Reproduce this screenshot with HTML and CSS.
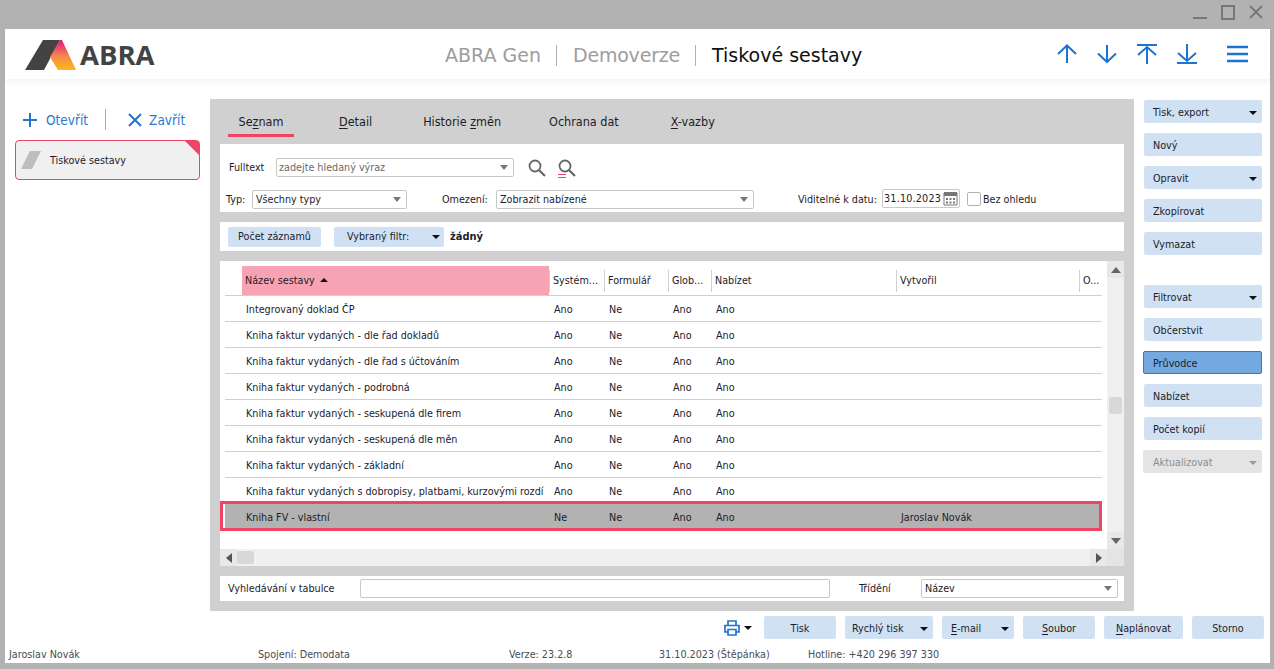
FILE: index.html
```html
<!DOCTYPE html>
<html lang="cs">
<head>
  <meta charset="UTF-8">
  <title>Tiskové sestavy</title>
  <link rel="stylesheet" href="styles.css">
</head>
<body>

  <div class="winbar">
    <svg width="72" height="20" viewBox="0 0 72 20">
      <path d="M1 15h14" stroke="#777" stroke-width="2"/>
      <path d="M30 3h12v13H30z" fill="none" stroke="#777" stroke-width="2"/>
      <path d="M58 3l12 12M70 3L58 15" stroke="#777" stroke-width="2"/>
    </svg>
  </div>

  <div class="window">
    <header class="top">
      <div class="logo">
        <svg width="52" height="30" viewBox="0 0 52 30">
          <defs>
            <linearGradient id="grad" x1="0" y1="0" x2="0" y2="1">
              <stop offset="0" stop-color="#e0167f"/>
              <stop offset=".55" stop-color="#f58a4a"/>
              <stop offset="1" stop-color="#fdb813"/>
            </linearGradient>
          </defs>
          <path d="M0 30L18 0h17L19 30z" fill="#434343"/>
          <path d="M35 0h2l14 30H33l-8-13z" fill="url(#grad)"/>
        </svg>
        <span class="logo-text">ABRA</span>
      </div>
      <div class="title">
        <span class="t-grey">ABRA Gen</span>
        <span class="t-sep"></span>
        <span class="t-grey t-demo">Demoverze</span>
        <span class="t-sep"></span>
        <span class="t-main">Tiskové sestavy</span>
      </div>
      <div class="nav">
        <svg width="20" height="20" viewBox="0 0 20 20"><path d="M10 19V2M1 10l9-8.500 9 8.500" fill="none" stroke="#1f74d0" stroke-width="2"/></svg>
        <svg width="20" height="20" viewBox="0 0 20 20"><path d="M10 1v17M1 9.500l9 8.500 9-8.500" fill="none" stroke="#1f74d0" stroke-width="2"/></svg>
        <svg width="20" height="20" viewBox="0 0 20 20"><path d="M0 1h20M10 20V3M1 11l9-8 9 8" fill="none" stroke="#1f74d0" stroke-width="2"/></svg>
        <svg width="20" height="20" viewBox="0 0 20 20"><path d="M0 19h20M10 0v17M1 9l9 8 9-8" fill="none" stroke="#1f74d0" stroke-width="2"/></svg>
        <svg class="burger" width="21" height="18" viewBox="0 0 21 18"><path d="M0 2h21M0 9h21M0 16h21" stroke="#1f74d0" stroke-width="2.500"/></svg>
      </div>
    </header>

    <div class="main">
      <aside class="side">
        <div class="side-tools">
          <svg width="14" height="14" viewBox="0 0 14 14"><path d="M7 0v14M0 7h14" stroke="#1f74d0" stroke-width="2"/></svg>
          <span class="side-link">Otevřít</span>
          <span class="side-sep"></span>
          <svg class="x-icon" width="14" height="14" viewBox="0 0 14 14"><path d="M1 1l12 12M13 1L1 13" stroke="#1f74d0" stroke-width="2"/></svg>
          <span class="side-link">Zavřít</span>
        </div>
        <div class="card">
          <svg width="20" height="18" viewBox="0 0 20 18"><path d="M0 18L9 0h11l-9 18z" fill="#bdbdbd"/></svg>
          <span>Tiskové sestavy</span>
        </div>
      </aside>

      <section class="center">
        <nav class="tabs">
          <span class="tab tab-on">Se<u>z</u>nam</span>
          <span class="tab tab-detail"><u>D</u>etail</span>
          <span class="tab tab-hist">Historie <u>z</u>měn</span>
          <span class="tab tab-data">Ochrana dat</span>
          <span class="tab tab-x"><u>X</u>-vazby</span>
        </nav>

        <div class="filter">
          <div class="f-row f-row1">
            <span class="lbl lbl-full">Fulltext</span>
            <div class="combo combo-text"><span class="hint">zadejte hledaný výraz</span><i class="arr"></i></div>
            <svg class="find" width="18" height="18" viewBox="0 0 18 18"><circle cx="7" cy="7" r="5.500" fill="none" stroke="#666" stroke-width="1.800"/><path d="M11 11l6 6" stroke="#666" stroke-width="2.200"/></svg>
            <svg class="find2" width="18" height="20" viewBox="0 0 18 20"><circle cx="7" cy="7" r="5.500" fill="none" stroke="#666" stroke-width="1.800"/><path d="M11 11l6 6" stroke="#666" stroke-width="2.200"/><path d="M0 15.500h8M0 18.500h8" stroke="#ee4466" stroke-width="1.200"/></svg>
          </div>
          <div class="f-row f-row2">
            <span class="lbl lbl-typ">Typ:</span>
            <div class="combo combo-typ"><span>Všechny typy</span><i class="arr"></i></div>
            <span class="lbl lbl-om">Omezení:</span>
            <div class="combo combo-om"><span>Zobrazit nabízené</span><i class="arr"></i></div>
            <span class="lbl lbl-vid">Viditelné k datu:</span>
            <div class="date">
              <span>31.10.2023</span>
              <svg width="15" height="16" viewBox="0 0 15 16"><path d="M1 3h13v12H1z" fill="#fff" stroke="#777"/><path d="M1 2h13v4H1z" fill="#777"/><path d="M3 8h2v2H3zM6.500 8h2v2h-2zM10 8h2v2h-2zM3 11.500h2v2H3zM6.500 11.500h2v2h-2zM10 11.500h2v2h-2z" fill="#777"/></svg>
            </div>
            <span class="check"></span>
            <span class="lbl">Bez ohledu</span>
          </div>
        </div>

        <div class="count-bar">
          <button class="btn btn-count">Počet záznamů</button>
          <button class="btn btn-filter">Vybraný filtr:<i class="arr-dark"></i></button>
          <strong>žádný</strong>
        </div>

        <div class="grid">
          <div class="rows">
            <div class="row row-head">
              <span></span>
              <span class="hc hc-sort">Název sestavy <i class="sort"></i></span>
              <span class="hc hc-line">Systém...</span>
              <span class="hc hc-line">Formulář</span>
              <span class="hc hc-line">Glob...</span>
              <span class="hc hc-line">Nabízet</span>
              <span class="hc hc-line">Vytvořil</span>
              <span class="hc hc-line">O...</span>
            </div>
            <div class="row"><span></span><span class="c-name">Integrovaný doklad ČP</span><span>Ano</span><span>Ne</span><span>Ano</span><span>Ano</span><span></span><span></span></div>
            <div class="row"><span></span><span class="c-name">Kniha faktur vydaných - dle řad dokladů</span><span>Ano</span><span>Ne</span><span>Ano</span><span>Ano</span><span></span><span></span></div>
            <div class="row"><span></span><span class="c-name">Kniha faktur vydaných - dle řad s účtováním</span><span>Ano</span><span>Ne</span><span>Ano</span><span>Ano</span><span></span><span></span></div>
            <div class="row"><span></span><span class="c-name">Kniha faktur vydaných - podrobná</span><span>Ano</span><span>Ne</span><span>Ano</span><span>Ano</span><span></span><span></span></div>
            <div class="row"><span></span><span class="c-name">Kniha faktur vydaných - seskupená dle firem</span><span>Ano</span><span>Ne</span><span>Ano</span><span>Ano</span><span></span><span></span></div>
            <div class="row"><span></span><span class="c-name">Kniha faktur vydaných - seskupená dle měn</span><span>Ano</span><span>Ne</span><span>Ano</span><span>Ano</span><span></span><span></span></div>
            <div class="row"><span></span><span class="c-name">Kniha faktur vydaných - základní</span><span>Ano</span><span>Ne</span><span>Ano</span><span>Ano</span><span></span><span></span></div>
            <div class="row"><span></span><span class="c-name">Kniha faktur vydaných s dobropisy, platbami, kurzovými rozdíly</span><span>Ano</span><span>Ne</span><span>Ano</span><span>Ano</span><span></span><span></span></div>
            <div class="row row-sel"><span></span><span class="c-name">Kniha FV - vlastní</span><span>Ne</span><span>Ne</span><span>Ano</span><span>Ano</span><span>Jaroslav Novák</span><span></span></div>
          </div>
          <div class="vbar">
            <div class="sb-btn"><i class="up"></i></div>
            <div class="vtrack"><div class="vthumb"></div></div>
            <div class="sb-btn"><i class="down"></i></div>
          </div>
          <div class="hbar">
            <div class="sb-btn"><i class="left"></i></div>
            <div class="hthumb"></div>
            <div class="sb-btn sb-right"><i class="right"></i></div>
          </div>
          <div class="corner"></div>
        </div>

        <div class="search-bar">
          <span class="lbl lbl-find">Vyhledávání v tabulce</span>
          <div class="search-input"></div>
          <span class="lbl lbl-sort">Třídění</span>
          <div class="combo combo-sort"><span>Název</span><i class="arr"></i></div>
        </div>
      </section>

      <aside class="actions">
        <button class="btn">Tisk, export<i class="arr-dark"></i></button>
        <button class="btn">Nový</button>
        <button class="btn">Opravit<i class="arr-dark"></i></button>
        <button class="btn">Zkopírovat</button>
        <button class="btn">Vymazat</button>
        <button class="btn btn-gap">Filtrovat<i class="arr-dark"></i></button>
        <button class="btn">Občerstvit</button>
        <button class="btn btn-active">Průvodce</button>
        <button class="btn">Nabízet</button>
        <button class="btn">Počet kopií</button>
        <button class="btn btn-off">Aktualizovat<i class="arr-off"></i></button>
      </aside>
    </div>

    <div class="bottom">
      <svg class="printer" width="16" height="16" viewBox="0 0 16 16"><path d="M4 5V1h8v4M4 12H1V5.500h14V12h-3M4 9.500h8V15H4z" fill="none" stroke="#1f74d0" stroke-width="1.700"/></svg>
      <i class="arr-dark arr-print"></i>
      <button class="btn b-wide b-center">Tisk</button>
      <button class="btn b-quick">Rychlý tisk<i class="arr-dark"></i></button>
      <button class="btn b-wide"><span><u>E</u>-mail</span><i class="arr-dark"></i></button>
      <button class="btn b-wide b-center"><span><u>S</u>oubor</span></button>
      <button class="btn b-plan b-center"><span><u>N</u>aplánovat</span></button>
      <button class="btn b-wide b-center">Storno</button>
    </div>

    <footer class="status">
      <span class="st-user">Jaroslav Novák</span>
      <span class="st-conn">Spojení: Demodata</span>
      <span class="st-ver">Verze: 23.2.8</span>
      <span class="st-date">31.10.2023 (Štěpánka)</span>
      <span>Hotline: +420 296 397 330</span>
    </footer>
  </div>

</body>
</html>
```

FILE: styles.css
```css
* { box-sizing: border-box; }
html, body { height: 100%; }
body { margin: 0; background: #b2b2b2; font-family: "DejaVu Sans Condensed", "DejaVu Sans", sans-serif; font-size: 10.700px; color: #1c1c2a; overflow: hidden; }
u { text-underline-offset: 2px; }

.winbar { height: 29px; display: flex; justify-content: flex-end; align-items: flex-start; padding: 3px 10px 0 0; }
.window { margin: 0 4px 0 5px; height: 634px; background: #fff; display: flex; flex-direction: column; }

/* header */
.top { height: 50px; flex: none; display: flex; align-items: center; box-shadow: 0 3px 6px rgba(0,0,0,.05); }
.logo { width: 440px; padding-left: 20px; display: flex; align-items: center; }
.logo svg { margin-top: 2px; }
.logo-text { font-family: "Open Sans", sans-serif; font-weight: 700; font-size: 27.500px; color: #434343; margin-left: 3px; }
.title { flex: 1; display: flex; align-items: center; padding-top: 2px; font-family: "DejaVu Sans", sans-serif; font-size: 19px; }
.t-grey { color: #a09c9c; }
.t-demo { letter-spacing: -.2px; }
.t-main { color: #111; }
.t-sep { width: 1px; height: 21px; background: #b0b0b8; margin: 0 16px 0 15px; }
.nav { display: flex; align-items: center; gap: 20px; padding-right: 22px; }
.burger { margin-left: 10px; }

/* main area */
.main { height: 532px; flex: none; padding-top: 20px; display: flex; }
.side { width: 205px; flex: none; padding: 0 10px; }
.side-tools { height: 41px; display: flex; align-items: center; padding-left: 8px; }
.side-link { color: #2b78d0; font-size: 13.500px; margin-left: 9px; }
.side-sep { width: 1px; height: 21px; background: #a8a8b8; margin: 0 22px 0 17px; }
.x-icon + .side-link { margin-left: 7px; }
.card { position: relative; height: 40px; background: #f0f0f0; border: 1px solid #ee4466; border-radius: 4px; display: flex; align-items: center; padding-left: 5px; gap: 9px; }
.card::after { content: ""; position: absolute; top: 0; right: 0; border-style: solid; border-width: 0 14px 14px 0; border-color: transparent #ee4466 transparent transparent; }

.center { width: 924px; flex: none; background: #d0d0d0; padding: 0 10px 10px; display: flex; flex-direction: column; }
.tabs { height: 45px; flex: none; display: flex; font-size: 12.500px; }
.tab { height: 38px; padding-top: 15px; }
.tab-on { width: 66px; margin-left: 8px; text-align: center; border-bottom: 3px solid #ee4466; }
.tab-detail { margin-left: 45px; }
.tab-hist { margin-left: 51px; }
.tab-data { margin-left: 48px; }
.tab-x { margin-left: 52px; }

.filter { height: 68px; flex: none; background: #fff; }
.f-row { display: flex; align-items: center; }
.f-row1 { height: 19px; margin-top: 14px; padding-left: 9px; }
.f-row2 { height: 20px; margin-top: 12px; padding-left: 6px; }
.lbl { white-space: nowrap; }
.lbl-full { width: 37px; }
.lbl-typ { width: 20px; }
.combo { height: 19px; border: 1px solid #c8c8c8; border-radius: 2px; display: flex; align-items: center; justify-content: space-between; padding: 0 5px 0 3px; background: #fff; }
.hint { color: #6a6a6a; margin-left: -1px; }
.arr { width: 0; height: 0; border-style: solid; border-width: 5px 4.500px 0; border-color: #777 transparent transparent; }
.combo-text { width: 238px; margin-left: 10px; }
.find { margin-left: 14px; }
.find2 { margin-left: 12px; margin-top: 2px; }
.combo-typ { width: 155px; margin-left: 6px; }
.lbl-om { width: 46px; margin-left: 35px; }
.combo-om { width: 258px; margin-left: 8px; }
.lbl-vid { width: 76px; margin-left: 44px; }
.date { width: 78px; height: 19px; margin: -2px 0 0 8px; border: 1px solid #c8c8c8; border-radius: 2px; display: flex; align-items: center; justify-content: space-between; padding: 0 1px 0 1px; letter-spacing: .2px; }
.check { width: 14px; height: 14px; margin: 0 2px 0 7px; border: 1px solid #b4b4b4; border-radius: 2px; }

.count-bar { height: 29px; flex: none; margin-top: 10px; background: #fff; display: flex; align-items: center; padding-left: 8px; }
.count-bar strong { margin-left: 6px; font-size: 11px; }
.btn { height: 23px; padding: 2px 5px 0 9px; border: 0; border-radius: 2px; background: #d0e1f4; color: #1c1c2a; font: inherit; display: flex; align-items: center; justify-content: space-between; }
.btn-count { height: 20px; width: 93px; justify-content: center; padding: 0; }
.btn-filter { height: 20px; width: 110px; margin-left: 13px; padding: 0 4px 0 13px; }
.arr-dark { width: 0; height: 0; border-style: solid; border-width: 4px 4px 0; border-color: #111 transparent transparent; }
.arr-off { width: 0; height: 0; border-style: solid; border-width: 4px 4px 0; border-color: #999 transparent transparent; }

/* grid */
.grid { height: 305px; flex: none; margin-top: 10px; background: #fff; display: grid; grid-template-columns: 1fr 17px; grid-template-rows: 1fr 17px; }
.rows { padding-top: 5px; overflow: hidden; }
.row { height: 26px; padding-top: 2px; margin-left: 5px; margin-right: 5px; border-bottom: 1px solid #d0d0d0; display: grid; grid-template-columns: 17px 307px 55px 64px 43px 185px 183px 23px; align-items: center; white-space: nowrap; }
.row span { padding-left: 5px; overflow: hidden; }
.row .c-name { padding-left: 4px; margin-right: 5px; }
.row-head { height: 30px; padding-top: 0; }
.row-head .hc { height: 22px; line-height: 22px; padding-left: 3px; }
.row-head .hc-sort { height: 29px; line-height: 29px; margin-right: 0; background: #f8a3b4; }
.hc-line { border-left: 1px solid #d0d0d0; }
.sort { display: inline-block; margin: 0 0 2px 2px; border-style: solid; border-width: 0 4px 4px; border-color: transparent transparent #111; }
.row-sel { height: 24px; margin-left: 3px; margin-right: 8px; background: #b2b2b2; border-bottom: 0; border-left: 2px solid #fff; box-shadow: 0 0 0 3px #ee4466; grid-template-columns: 17px 307px 55px 64px 43px 185px 183px 20px; }

.vbar { background: #f0f0f0; display: flex; flex-direction: column; }
.vtrack { flex: 1; padding: 119px 2px 0; }
.vthumb { height: 17px; background: #d8d8d8; border-radius: 2px; }
.hbar { background: #f0f0f0; display: flex; align-items: center; }
.hthumb { width: 17px; height: 13px; background: #d8d8d8; border-radius: 2px; }
.sb-btn { width: 17px; height: 17px; flex: none; display: flex; align-items: center; justify-content: center; background: #e8e8e8; }
.sb-right { margin-left: auto; }
.corner { background: #e4e4e4; }
.up { border-style: solid; border-width: 0 5px 6px; border-color: transparent transparent #666; }
.down { border-style: solid; border-width: 6px 5px 0; border-color: #666 transparent transparent; }
.left { border-style: solid; border-width: 5px 6px 5px 0; border-color: transparent #555 transparent transparent; }
.right { border-style: solid; border-width: 5px 0 5px 6px; border-color: transparent transparent transparent #555; }

.search-bar { height: 25px; flex: none; margin-top: 10px; background: #fff; display: flex; align-items: center; padding-left: 8px; }
.lbl-find { width: 106px; }
.search-input { width: 470px; height: 19px; margin-left: 26px; border: 1px solid #c8c8c8; border-radius: 2px; }
.lbl-sort { margin-left: 29px; width: 33px; }
.combo-sort { width: 197px; margin-left: 29px; }

/* right column */
.actions { padding: 1px 8px 0 10px; flex: 1; display: flex; flex-direction: column; gap: 10px; }
.actions .btn { width: 118px; flex: none; }
.actions .btn-gap { margin-top: 20px; }
.actions .btn-active { width: 119px; margin-left: -1px; padding-left: 9px; background: #74a8e0; border: 1px solid #2f78d0; }
.actions .btn-off { width: 119px; margin-left: -1px; padding-left: 10px; background: #e4e4e4; color: #8c8c8c; }

/* bottom */
.bottom { height: 23px; flex: none; margin-top: 5px; display: flex; align-items: center; justify-content: flex-end; gap: 9px; padding-right: 6px; }
.printer { margin-right: -5px; }
.arr-print { margin-right: 3px; }
.b-wide { width: 72px; }
.b-quick { width: 88px; padding-left: 7px; }
.b-plan { width: 79px; }
.b-center { justify-content: center; padding: 2px 0 0; }

.status { height: 18px; flex: none; margin-top: 6px; display: flex; align-items: center; padding-left: 4px; color: #4a4a55; white-space: nowrap; }
.st-user { width: 249px; }
.st-conn { width: 251px; }
.st-ver { width: 150px; }
.st-date { width: 149px; }
```
